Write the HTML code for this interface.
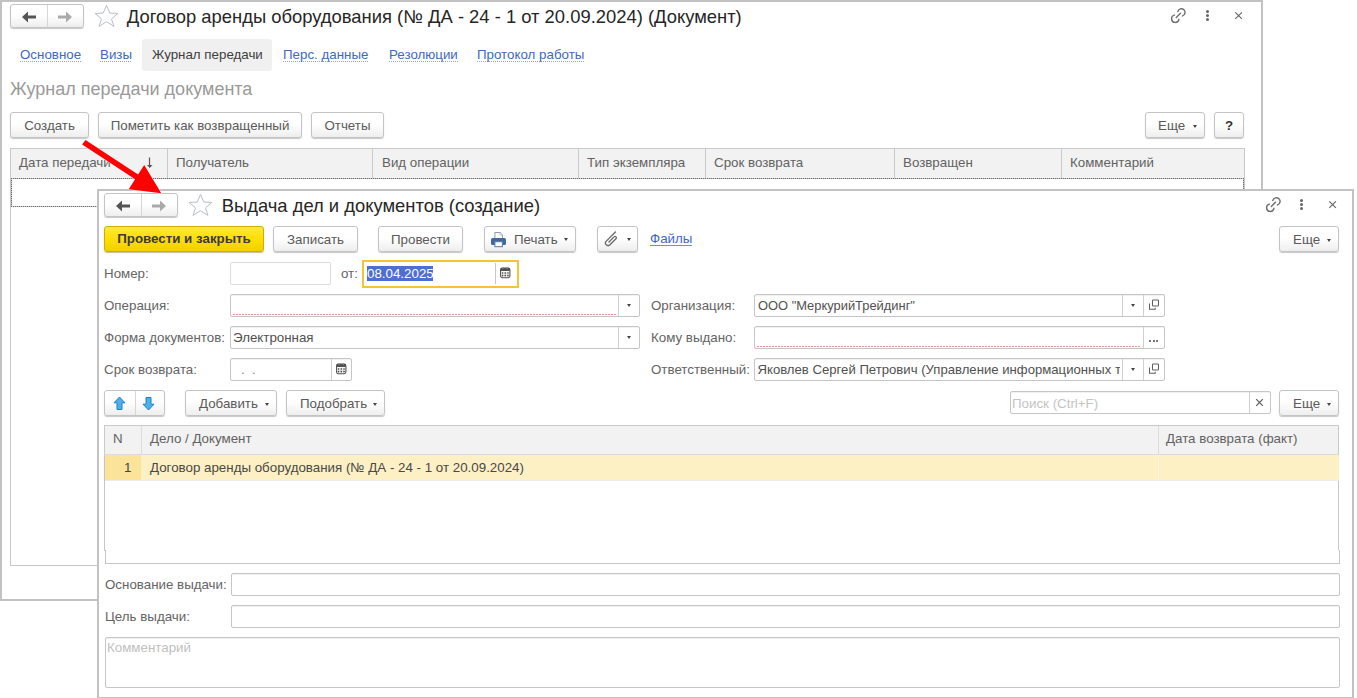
<!DOCTYPE html>
<html><head><meta charset="utf-8">
<style>
*{box-sizing:border-box}
html,body{margin:0;padding:0}
body{width:1357px;height:698px;overflow:hidden;position:relative;background:#fff;font-family:"Liberation Sans",sans-serif;font-size:13.33px;color:#626262}
.a{position:absolute}
.win{position:absolute;border:2px solid #c2c2c2;background:#fff}
.t{position:absolute;white-space:nowrap;line-height:16px}
.btn{position:absolute;height:26px;border:1px solid #c4c4c4;border-radius:3px;background:linear-gradient(#fff 45%,#eeeeee);box-shadow:0 1px 1px rgba(0,0,0,.22);color:#5a5a5a;white-space:nowrap;line-height:25px;text-align:center}
.title{position:absolute;white-space:nowrap;font-size:18.4px;color:#262626;line-height:22px}
.lnk{position:absolute;white-space:nowrap;color:#4169c0;line-height:16px;height:15px;background:linear-gradient(to right,#8ea6dc 50%,rgba(255,255,255,0) 50%) left bottom/2px 1px repeat-x}
.th{position:absolute;background:#f2f2f2;border:1px solid #c9c9c9}
.cd{position:absolute;width:1px;background:#dcdcdc}
.inp{position:absolute;height:23px;border:1px solid #c6c6c6;border-radius:2px;background:#fff;box-shadow:inset 0 1px 1px rgba(0,0,0,.06)}
.lbl{position:absolute;white-space:nowrap;line-height:16px;color:#646464}
.dd{position:absolute;width:0;height:0;border-left:2.5px solid transparent;border-right:2.5px solid transparent;border-top:3px solid #444}
.red{position:absolute;height:1px;background:linear-gradient(to right,#f47f7f 66%,rgba(255,255,255,0) 66%) left top/3px 1px repeat-x;opacity:.85}
</style></head><body>

<!-- ============ OUTER WINDOW ============ -->
<div class="win" style="left:0;top:0;width:1263px;height:601px"></div>

<!-- nav buttons -->
<div class="btn" style="left:10px;top:4px;width:74px;height:24px"></div>
<div class="a" style="left:47px;top:5px;width:1px;height:22px;background:#d6d6d6"></div>
<svg class="a" style="left:21px;top:10.5px" width="16" height="12" viewBox="0 0 16 12"><path d="M1 6 L7 0.5 L7 4.5 L15 4.5 L15 7.5 L7 7.5 L7 11.5 Z" fill="#555"/></svg>
<svg class="a" style="left:57px;top:10.5px" width="16" height="12" viewBox="0 0 16 12"><path d="M15 6 L9 0.5 L9 4.5 L1 4.5 L1 7.5 L9 7.5 L9 11.5 Z" fill="#aaa"/></svg>
<!-- star -->
<svg class="a" style="left:94px;top:5px" width="25" height="23" viewBox="0 0 25 23"><path d="M12.5 0.4 L15.8 8.1 L23.9 8.4 L17.5 13.9 L20 21.4 L12.5 16.7 L5 21.4 L7.5 13.9 L1.1 8.4 L9.2 8.1 Z" fill="none" stroke="#b9bfc6" stroke-width="1"/></svg>
<div class="title" style="left:126.8px;top:5.5px">Договор аренды оборудования (№ ДА - 24 - 1 от 20.09.2024) (Документ)</div>
<!-- top right icons -->
<svg class="a" style="left:1166px;top:4px" width="22" height="22" viewBox="0 0 22 22"><path d="M11.81 7.50 A3.7 3.7 0 1 1 16.54 11.92 M8.40 11.11 A3.7 3.7 0 1 0 12.94 15.34 M10.3 13.6 L14.4 9.3" fill="none" stroke="#707070" stroke-width="1.45" stroke-linecap="round"/></svg>
<div class="a" style="left:1206px;top:9.5px;width:3px;height:3px;border-radius:50%;background:#666"></div>
<div class="a" style="left:1206px;top:13.5px;width:3px;height:3px;border-radius:50%;background:#666"></div>
<div class="a" style="left:1206px;top:17.5px;width:3px;height:3px;border-radius:50%;background:#666"></div>
<svg class="a" style="left:1234px;top:11px" width="9" height="9" viewBox="0 0 9 9"><path d="M1.3 1.3 L7.9 7.9 M7.9 1.3 L1.3 7.9" stroke="#666" stroke-width="1.15"/></svg>

<!-- tabs -->
<div class="lnk" style="left:20px;top:47px">Основное</div>
<div class="lnk" style="left:100px;top:47px">Визы</div>
<div class="a" style="left:142px;top:39px;width:130px;height:32px;background:#f0f0f0;border-radius:3px"></div>
<div class="t" style="left:152px;top:47px;color:#3e3e3e">Журнал передачи</div>
<div class="lnk" style="left:283px;top:47px">Перс. данные</div>
<div class="lnk" style="left:389px;top:47px">Резолюции</div>
<div class="lnk" style="left:477px;top:47px">Протокол работы</div>

<div class="t" style="left:10px;top:78px;font-size:18px;line-height:22px;color:#9a9a9a">Журнал передачи документа</div>

<!-- toolbar -->
<div class="btn" style="left:10px;top:112px;width:79px">Создать</div>
<div class="btn" style="left:98px;top:112px;width:204px">Пометить как возвращенный</div>
<div class="btn" style="left:311px;top:112px;width:73px">Отчеты</div>
<div class="btn" style="left:1145px;top:112px;width:60px;text-align:left;padding-left:12px">Еще</div>
<div class="dd" style="left:1193px;top:125px"></div>
<div class="btn" style="left:1214px;top:112px;width:30px;font-weight:bold;color:#333">?</div>

<!-- table -->
<div class="a" style="left:10px;top:148px;width:1235px;height:418px;border:1px solid #c6c6c6;background:#fff"></div>
<div class="th" style="left:10px;top:148px;width:1235px;height:30px;border-bottom:none"></div>
<div class="cd" style="left:167px;top:149px;height:29px;background:#c9c9c9"></div>
<div class="cd" style="left:372px;top:149px;height:29px;background:#c9c9c9"></div>
<div class="cd" style="left:578px;top:149px;height:29px;background:#c9c9c9"></div>
<div class="cd" style="left:705px;top:149px;height:29px;background:#c9c9c9"></div>
<div class="cd" style="left:894px;top:149px;height:29px;background:#c9c9c9"></div>
<div class="cd" style="left:1061px;top:149px;height:29px;background:#c9c9c9"></div>
<div class="t" style="left:19px;top:155px">Дата передачи</div>
<svg class="a" style="left:146px;top:157px" width="8" height="12" viewBox="0 0 8 12"><path d="M3.5 0.5 V8" stroke="#555" stroke-width="1.2"/><path d="M1 8 H6.5 L3.75 11 Z" fill="#555"/></svg>
<div class="t" style="left:176px;top:155px">Получатель</div>
<div class="t" style="left:382px;top:155px">Вид операции</div>
<div class="t" style="left:587px;top:155px">Тип экземпляра</div>
<div class="t" style="left:714px;top:155px">Срок возврата</div>
<div class="t" style="left:903px;top:155px">Возвращен</div>
<div class="t" style="left:1070px;top:155px">Комментарий</div>
<div class="a" style="left:11px;top:178px;width:1233px;height:1px;background:linear-gradient(to right,#6e6e6e 50%,#c4c4c4 50%) 0 0/2px 1px repeat-x"></div><div class="a" style="left:11px;top:206px;width:1233px;height:1px;background:linear-gradient(to right,#6e6e6e 50%,#c4c4c4 50%) 0 0/2px 1px repeat-x"></div><div class="a" style="left:11px;top:178px;width:1px;height:29px;background:linear-gradient(to bottom,#6e6e6e 50%,#c4c4c4 50%) 0 0/1px 2px repeat-y"></div><div class="a" style="left:1243px;top:178px;width:1px;height:29px;background:linear-gradient(to bottom,#6e6e6e 50%,#c4c4c4 50%) 0 0/1px 2px repeat-y"></div>

<!-- ============ SECOND WINDOW ============ -->
<div class="win" style="left:97px;top:189px;width:1257px;height:510px"></div>

<div class="btn" style="left:104px;top:193px;width:74px;height:24px"></div>
<div class="a" style="left:141px;top:194px;width:1px;height:22px;background:#d6d6d6"></div>
<svg class="a" style="left:115px;top:199.5px" width="16" height="12" viewBox="0 0 16 12"><path d="M1 6 L7 0.5 L7 4.5 L15 4.5 L15 7.5 L7 7.5 L7 11.5 Z" fill="#555"/></svg>
<svg class="a" style="left:151px;top:199.5px" width="16" height="12" viewBox="0 0 16 12"><path d="M15 6 L9 0.5 L9 4.5 L1 4.5 L1 7.5 L9 7.5 L9 11.5 Z" fill="#aaa"/></svg>
<svg class="a" style="left:188px;top:194px" width="25" height="23" viewBox="0 0 25 23"><path d="M12.5 0.4 L15.8 8.1 L23.9 8.4 L17.5 13.9 L20 21.4 L12.5 16.7 L5 21.4 L7.5 13.9 L1.1 8.4 L9.2 8.1 Z" fill="none" stroke="#b9bfc6" stroke-width="1"/></svg>
<div class="title" style="left:221.7px;top:195px">Выдача дел и документов (создание)</div>
<svg class="a" style="left:1261px;top:193px" width="22" height="22" viewBox="0 0 22 22"><path d="M11.81 7.50 A3.7 3.7 0 1 1 16.54 11.92 M8.40 11.11 A3.7 3.7 0 1 0 12.94 15.34 M10.3 13.6 L14.4 9.3" fill="none" stroke="#707070" stroke-width="1.45" stroke-linecap="round"/></svg>
<div class="a" style="left:1300px;top:198.5px;width:3px;height:3px;border-radius:50%;background:#666"></div>
<div class="a" style="left:1300px;top:202.5px;width:3px;height:3px;border-radius:50%;background:#666"></div>
<div class="a" style="left:1300px;top:206.5px;width:3px;height:3px;border-radius:50%;background:#666"></div>
<svg class="a" style="left:1328px;top:200px" width="9" height="9" viewBox="0 0 9 9"><path d="M1.3 1.3 L7.9 7.9 M7.9 1.3 L1.3 7.9" stroke="#666" stroke-width="1.15"/></svg>

<!-- toolbar 2 -->
<div class="btn" style="left:104px;top:226px;width:160px;background:linear-gradient(#ffe83c,#ffdf00 50%,#f0d000);border-color:#cfb000;color:#3a3a40;font-weight:bold;line-height:24px;box-shadow:0 1px 1px rgba(90,70,0,.35)">Провести и закрыть</div>
<div class="btn" style="left:273px;top:226px;width:85px">Записать</div>
<div class="btn" style="left:378px;top:226px;width:85px">Провести</div>
<div class="btn" style="left:484px;top:226px;width:92px;text-align:left;padding-left:29px">Печать</div>
<svg class="a" style="left:490px;top:231px" width="17" height="17" viewBox="0 0 17 17"><path d="M4.9 1.5 H10.2 L12.4 3.7 V7.5 H4.9 Z" fill="#fff" stroke="#8c9aab" stroke-width="1"/><path d="M10 1.7 V4 H12.2" fill="none" stroke="#b0bac6" stroke-width="0.8"/><rect x="1" y="7" width="15" height="7" rx="1.6" fill="#43699a"/><rect x="4.9" y="10.7" width="7.5" height="5" fill="#fff" stroke="#5a7aa5" stroke-width="1"/></svg>
<div class="dd" style="left:564px;top:238px"></div>
<div class="btn" style="left:597px;top:226px;width:41px"></div>
<svg class="a" style="left:603px;top:230px" width="16" height="17" viewBox="0 0 16 17"><path transform="translate(11.3,3.1) rotate(45) scale(1.08)" d="M0 -1.5 V10.5 A2.4 2.4 0 0 0 4.8 10.5 V2.6 A1.25 1.25 0 0 0 2.3 2.6 V9.3" fill="none" stroke="#666" stroke-width="1.2" stroke-linecap="round"/></svg>
<div class="dd" style="left:626.5px;top:237.5px"></div>
<div class="t" style="left:650px;top:231px;color:#3f66c2">Файлы</div><div class="a" style="left:650px;top:245px;width:42px;height:1px;background:#6d8fd8"></div>
<div class="btn" style="left:1279px;top:226px;width:60px;text-align:left;padding-left:13px">Еще</div>
<div class="dd" style="left:1327px;top:239px"></div>

<!-- fields row 1 -->
<div class="lbl" style="left:104px;top:266px">Номер:</div>
<div class="inp" style="left:230px;top:262px;width:101px;border-color:#dcdcdc;box-shadow:none"></div>
<div class="lbl" style="left:341px;top:266px">от:</div>
<div class="a" style="left:362px;top:260px;width:157px;height:28px;border:2px solid #f6c431;background:#fff"></div>
<div class="a" style="left:367px;top:266px;width:66px;height:15px;background:#4e6fd0"></div>
<div class="t" style="left:367px;top:266px;color:#fff">08.04.2025</div>
<div class="a" style="left:495px;top:263px;width:1px;height:21px;background:#c8c8c8"></div>
<svg class="a" style="left:500px;top:267px" width="11" height="12" viewBox="0 0 11 12"><rect x="0.6" y="1.1" width="9.3" height="9.6" rx="1.6" fill="#fff" stroke="#505050" stroke-width="1.1"/><rect x="0.6" y="1.1" width="9.3" height="2.9" rx="1" fill="#505050"/><rect x="1.8" y="4.8" width="6.9" height="5" fill="#e6e6e6"/><g fill="#404040"><circle cx="2.5" cy="6" r="0.8"/><circle cx="5.25" cy="6" r="0.8"/><circle cx="8" cy="6" r="0.8"/><circle cx="2.5" cy="8.6" r="0.8"/><circle cx="5.25" cy="8.6" r="0.8"/><circle cx="8" cy="8.6" r="0.8"/></g><rect x="2.1" y="0.2" width="1.6" height="1.6" rx="0.5" fill="#888"/><rect x="6.5" y="0.2" width="1.6" height="1.6" rx="0.5" fill="#888"/></svg>

<!-- row 2 -->
<div class="lbl" style="left:104px;top:298px">Операция:</div>
<div class="inp" style="left:230px;top:294px;width:410px"></div>
<div class="a" style="left:618px;top:295px;width:1px;height:21px;background:#d0d0d0"></div>
<div class="dd" style="left:626.5px;top:303.5px"></div>
<div class="red" style="left:233px;top:314px;width:383px"></div>
<div class="lbl" style="left:651px;top:298px">Организация:</div>
<div class="inp" style="left:754px;top:294px;width:411px"></div>
<div class="t" style="left:758px;top:298px;color:#505050;font-size:12.9px">ООО "МеркурийТрейдинг"</div>
<div class="a" style="left:1122px;top:295px;width:1px;height:21px;background:#d0d0d0"></div>
<div class="a" style="left:1143px;top:295px;width:1px;height:21px;background:#d0d0d0"></div>
<div class="dd" style="left:1130.5px;top:303.5px"></div>
<svg class="a" style="left:1148px;top:299px" width="12" height="11" viewBox="0 0 12 11"><rect x="4.5" y="1" width="6" height="6" rx="0.8" fill="none" stroke="#5e5e5e" stroke-width="1.05"/><path d="M1.5 4.5 V10.2 H7.2 V8.7" fill="none" stroke="#5e5e5e" stroke-width="1.05"/></svg>

<!-- row 3 -->
<div class="lbl" style="left:104px;top:330px">Форма документов:</div>
<div class="inp" style="left:230px;top:326px;width:410px"></div>
<div class="t" style="left:233px;top:330px;color:#505050">Электронная</div>
<div class="a" style="left:618px;top:327px;width:1px;height:21px;background:#d0d0d0"></div>
<div class="dd" style="left:626.5px;top:335.5px"></div>
<div class="lbl" style="left:651px;top:330px">Кому выдано:</div>
<div class="inp" style="left:754px;top:326px;width:411px"></div>
<div class="a" style="left:1143px;top:327px;width:1px;height:21px;background:#d0d0d0"></div>
<div class="red" style="left:757px;top:346px;width:384px"></div>
<div class="a" style="left:1149px;top:340px;width:2px;height:2px;background:#777"></div><div class="a" style="left:1152.5px;top:340px;width:2px;height:2px;background:#777"></div><div class="a" style="left:1156px;top:340px;width:2px;height:2px;background:#777"></div>

<!-- row 4 -->
<div class="lbl" style="left:104px;top:362px">Срок возврата:</div>
<div class="inp" style="left:230px;top:358px;width:122px"></div>
<div class="a" style="left:331px;top:359px;width:1px;height:21px;background:#d0d0d0"></div>
<div class="t" style="left:241px;top:362px;color:#888">.&nbsp;&nbsp;.</div>
<svg class="a" style="left:336px;top:363px" width="11" height="12" viewBox="0 0 11 12"><rect x="0.6" y="1.1" width="9.3" height="9.6" rx="1.6" fill="#fff" stroke="#505050" stroke-width="1.1"/><rect x="0.6" y="1.1" width="9.3" height="2.9" rx="1" fill="#505050"/><rect x="1.8" y="4.8" width="6.9" height="5" fill="#e6e6e6"/><g fill="#404040"><circle cx="2.5" cy="6" r="0.8"/><circle cx="5.25" cy="6" r="0.8"/><circle cx="8" cy="6" r="0.8"/><circle cx="2.5" cy="8.6" r="0.8"/><circle cx="5.25" cy="8.6" r="0.8"/><circle cx="8" cy="8.6" r="0.8"/></g><rect x="2.1" y="0.2" width="1.6" height="1.6" rx="0.5" fill="#888"/><rect x="6.5" y="0.2" width="1.6" height="1.6" rx="0.5" fill="#888"/></svg>
<div class="lbl" style="left:651px;top:362px">Ответственный:</div>
<div class="inp" style="left:754px;top:358px;width:411px;overflow:hidden"></div>
<div class="a" style="left:755px;top:359px;width:365px;height:21px;overflow:hidden"><div class="t" style="left:2.5px;top:3px;color:#505050;font-size:13.15px">Яковлев Сергей Петрович (Управление информационных технологий)</div></div>
<div class="a" style="left:1122px;top:359px;width:1px;height:21px;background:#d0d0d0"></div>
<div class="a" style="left:1143px;top:359px;width:1px;height:21px;background:#d0d0d0"></div>
<div class="dd" style="left:1130.5px;top:367.5px"></div>
<svg class="a" style="left:1148px;top:363px" width="12" height="11" viewBox="0 0 12 11"><rect x="4.5" y="1" width="6" height="6" rx="0.8" fill="none" stroke="#5e5e5e" stroke-width="1.05"/><path d="M1.5 4.5 V10.2 H7.2 V8.7" fill="none" stroke="#5e5e5e" stroke-width="1.05"/></svg>

<!-- table toolbar -->
<div class="btn" style="left:104px;top:390px;width:61px"></div>
<div class="a" style="left:135px;top:391px;width:1px;height:24px;background:#d6d6d6"></div>
<svg class="a" style="left:113px;top:396px" width="13" height="15" viewBox="0 0 13 15"><path d="M6.5 1 L12 6.8 H9 V13.5 H4 V6.8 H1 Z" fill="#4db0ec" stroke="#1f80c4" stroke-width="1" stroke-linejoin="round"/></svg>
<svg class="a" style="left:142px;top:396px" width="13" height="15" viewBox="0 0 13 15"><path d="M6.5 14 L12 8.2 H9 V1.5 H4 V8.2 H1 Z" fill="#4db0ec" stroke="#1f80c4" stroke-width="1" stroke-linejoin="round"/></svg>
<div class="btn" style="left:185px;top:390px;width:92px;text-align:left;padding-left:13px">Добавить</div>
<div class="dd" style="left:265px;top:403px"></div>
<div class="btn" style="left:286px;top:390px;width:99px;text-align:left;padding-left:13px">Подобрать</div>
<div class="dd" style="left:373px;top:403px"></div>
<div class="inp" style="left:1010px;top:391px;width:261px"></div>
<div class="t" style="left:1012px;top:396px;color:#c4c4c4">Поиск (Ctrl+F)</div>
<div class="a" style="left:1249px;top:392px;width:1px;height:21px;background:#d0d0d0"></div>
<svg class="a" style="left:1255px;top:398px" width="9" height="9" viewBox="0 0 9 9"><path d="M1.2 1.2 L7.8 7.8 M7.8 1.2 L1.2 7.8" stroke="#5a5a5a" stroke-width="1.2"/></svg>
<div class="btn" style="left:1279px;top:390px;width:60px;text-align:left;padding-left:13px">Еще</div>
<div class="dd" style="left:1327px;top:403px"></div>

<!-- table 2 -->
<div class="a" style="left:104px;top:425px;width:1235px;height:126px;border:1px solid #c6c6c6;border-bottom:none;background:#fff"></div>
<div class="a" style="left:105px;top:550px;width:1235px;height:14px;border:1px solid #c6c6c6;border-top:none;background:#fff"></div>
<div class="th" style="left:104px;top:425px;width:1235px;height:30px;border-bottom:1px solid #dcdcdc"></div>
<div class="cd" style="left:141px;top:426px;height:28px"></div>
<div class="cd" style="left:1158px;top:426px;height:28px"></div>
<div class="t" style="left:113px;top:431px">N</div>
<div class="t" style="left:150px;top:431px">Дело / Документ</div>
<div class="t" style="left:1166px;top:431px">Дата возврата (факт)</div>
<div class="a" style="left:105px;top:455px;width:1234px;height:25px;background:#fdf0c5"></div>
<div class="a" style="left:105px;top:455px;width:36px;height:25px;background:#fbe49a"></div>
<div class="a" style="left:1158px;top:455px;width:1px;height:25px;background:#fff8e0"></div>
<div class="a" style="left:105px;top:480px;width:1234px;height:1px;background:#ececec"></div>
<div class="t" style="left:124px;top:460px;color:#444">1</div>
<div class="t" style="left:150px;top:460px;color:#484848">Договор аренды оборудования (№ ДА - 24 - 1 от 20.09.2024)</div>

<!-- bottom fields -->
<div class="lbl" style="left:105px;top:577px">Основание выдачи:</div>
<div class="inp" style="left:231px;top:573px;width:1109px"></div>
<div class="lbl" style="left:105px;top:609px">Цель выдачи:</div>
<div class="inp" style="left:231px;top:605px;width:1109px"></div>
<div class="inp" style="left:105px;top:637px;width:1235px;height:51px"></div>
<div class="t" style="left:107px;top:640px;color:#c0c0c0">Комментарий</div>

<!-- red arrow -->
<svg class="a" style="left:0;top:0" width="1357" height="698"><path d="M85.5 140 L138.1 174.6 L144.2 165.1 L161.3 193.2 L128.7 189.2 L135.1 179.3 L82.2 144.5 Z" fill="#ff0000" stroke="rgba(255,255,255,0.7)" stroke-width="1" paint-order="stroke"/></svg>

</body></html>
